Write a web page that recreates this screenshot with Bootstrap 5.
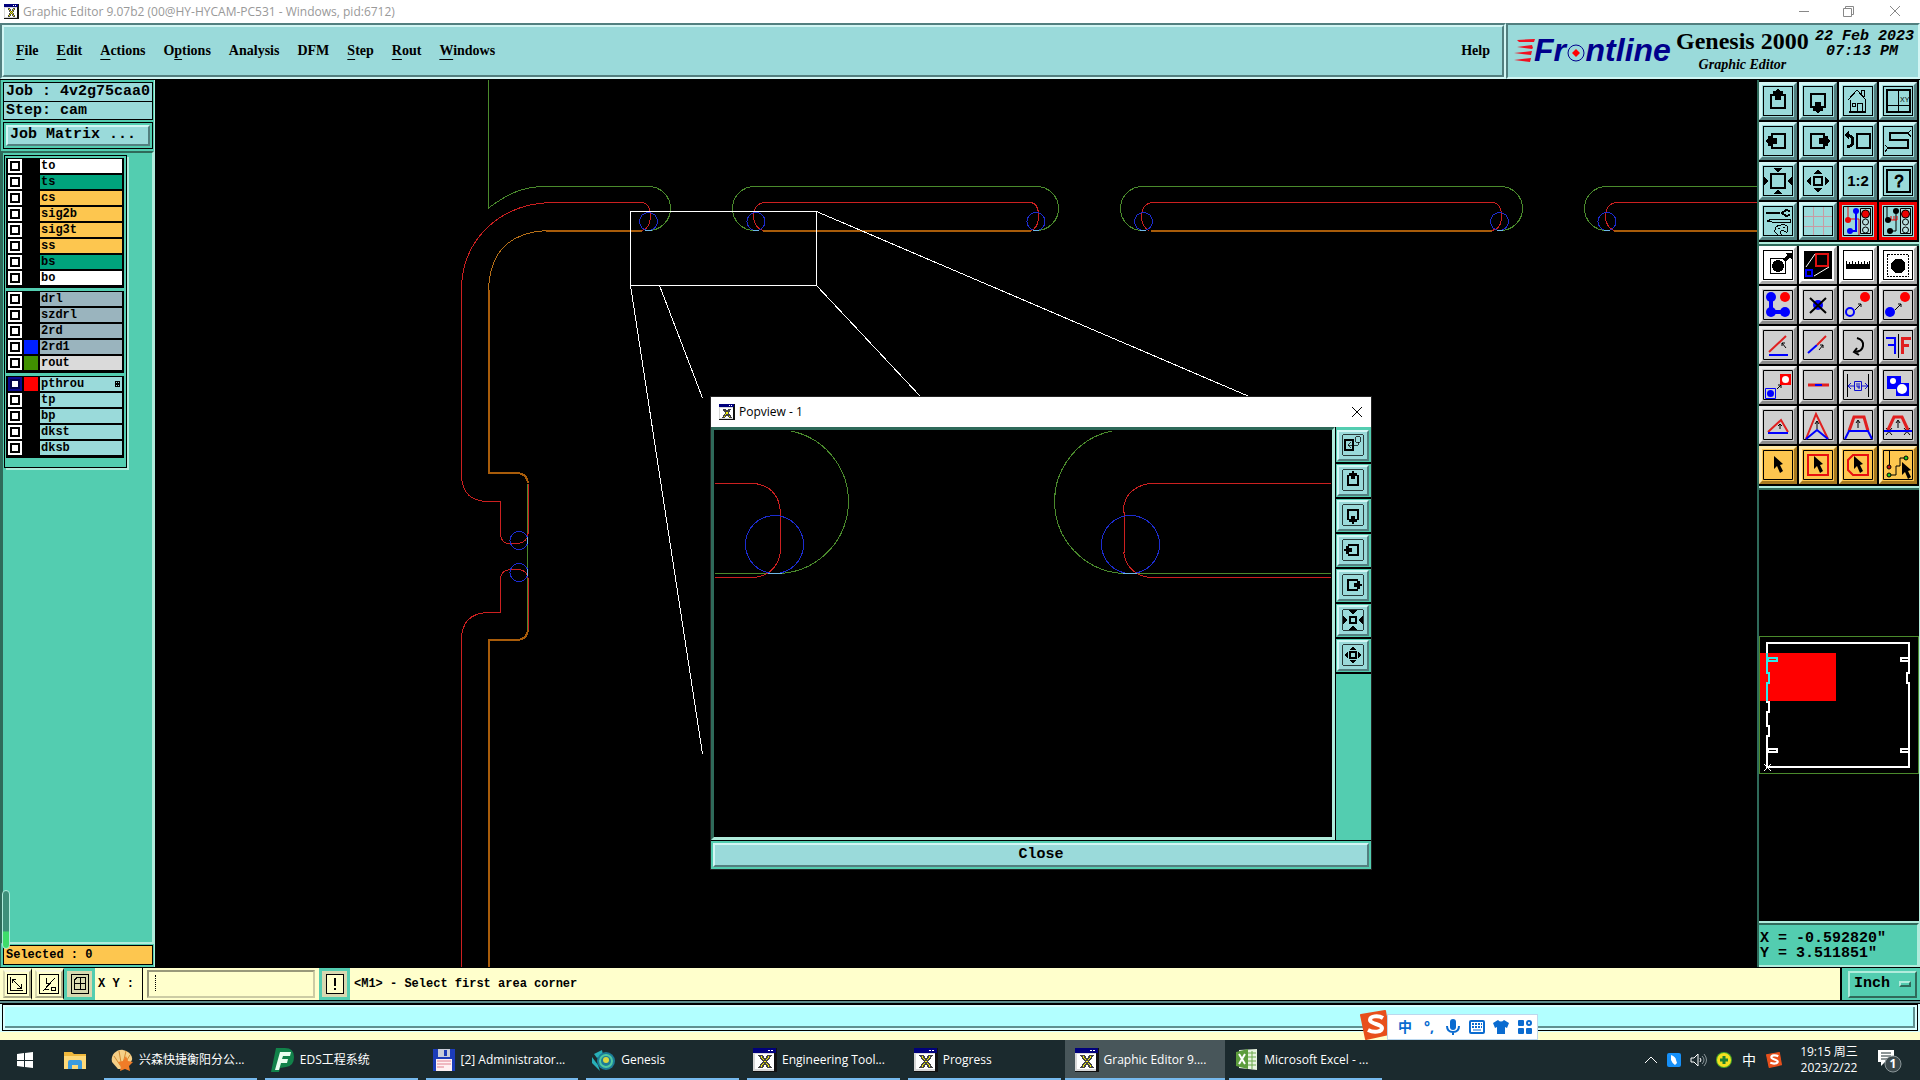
<!DOCTYPE html>
<html lang="en">
<head>
<meta charset="utf-8">
<meta name="viewport" content="width=device-width, initial-scale=1">
<title>Graphic Editor 9.07b2</title>
<link href="https://cdn.jsdelivr.net/npm/bootstrap@5.3.0/dist/css/bootstrap.min.css" rel="stylesheet">
<style>
:root{--aqua:#9adada;--aquaL:#d2f6f4;--aquaD:#527f7f;--teal:#53cdb0;--tealL:#b0ecdc;--tealD:#2f6a5a;--cream:#ffffcc;--amber:#fdc64f}
body{font-family:"Open Sans","Noto Sans CJK SC",sans-serif;font-size:12px;line-height:16px;color:#000;background:#000;overflow:hidden}
button,input,select{font:inherit;color:inherit;border-radius:0;padding:0}
svg{display:block;flex:none}
a{color:inherit;text-decoration:none}
.serif{font-family:"Liberation Serif",serif;font-weight:700}
.mono{font-family:"Liberation Mono",monospace;font-weight:700}
.m12{font-size:12px;line-height:16px}
.m15{font-size:15px;line-height:16px}
.raise{border:3px solid;border-color:var(--aquaL) var(--aquaD) var(--aquaD) var(--aquaL);background:var(--aqua)}
.title-strip{height:23px;background:#fff;color:#999}
.win-btn{width:46px;height:23px;border:0;background:none}
.head-row{height:57px;border-bottom:1px solid #000;background:var(--aqua)}
.head-pane{border:2px solid;border-color:var(--aquaD) var(--aquaL) var(--aquaL) var(--aquaD)}
.head-in{border:2px solid;border-color:var(--aquaL) var(--aquaD) var(--aquaD) var(--aquaL);height:100%}
.menu-list{gap:18px;font-size:14px;line-height:16px;padding:0 12px}
.menu-list u{text-underline-offset:4px;text-decoration-thickness:1px}
.brand-pane{width:414px;padding:0 4px 0 6px}
.product{font-size:24px;line-height:24px}
.sub{font-size:14px;line-height:16px}
.date-box{line-height:15px}
.side-l{width:155px;background:var(--teal);border-left:1px solid var(--tealD);border-right:1px solid var(--tealL)}
.job-box{border:1px solid #000;margin:2px 1px 0 2px;background:var(--aqua)}
.job-box div{padding:1px 0 0 2px;height:18px}
.job-box div+div{border-top:1px solid #000}
.matrix-wrap{border:1px solid #000;margin:2px 1px 2px 2px;padding:2px}
.matrix-btn{height:21px;width:100%;text-align:left;padding-left:2px;border-width:2px}
.layer-pane{border:2px solid;border-color:var(--tealD) var(--tealL) var(--tealL) var(--tealD)}
.layer-box{width:123px;margin:2px 2px 2px 1px;padding:2px 1px 1px;border:1px solid #000;box-shadow:2px 2px 0 var(--tealL);height:313px}
.layer-group{background:#000;padding:1px 1px 0;width:118px;margin-bottom:3px;border:solid #000;border-width:0 1px 1px}
.layer-row{height:16px;gap:2px;padding-bottom:2px}
.layer-row input{appearance:none;width:14px;height:14px;margin:0;background:#fff;border:2px solid #fff;box-shadow:inset 0 0 0 2px #000;flex:none}
.layer-row input:checked{border-color:#0a0a90;box-shadow:inset 0 0 0 2px #02024a}
.swatch{width:14px;height:14px;flex:none}
.layer-name{height:14px;padding-left:1px;line-height:14px}
.l-white{background:#fff}.l-green{background:#00a37c}.l-amber{background:var(--amber)}.l-steel{background:#9ab4be}.l-grey{background:#dadada}.l-aqua{background:var(--aqua)}
.blue{background:#0020ff}.green{background:#409000}.red{background:#f00}
.sel-box{border:1px solid #000;background:var(--amber);margin:1px 1px 2px 2px;height:20px;padding:1px 0 0 2px}
.meter{left:1px;bottom:18px;width:8px;height:59px;border:1px solid var(--tealL);border-radius:4px;background:linear-gradient(#3f8f7a 0 70%,#3fdc6a 72%)}
.pop{left:555px;top:316px;width:662px;height:474px;background:#000;border:1px solid #222}
.pop-title{height:30px;background:#fff}
.pop-view{border:3px solid;border-color:var(--tealD) var(--tealL) var(--tealL) var(--tealD);background:#000;overflow:hidden}
.pop-tools{width:35px;background:var(--teal);margin-left:1px;padding-top:2px}
.pop-tools div{border-bottom:2px solid #000;padding:1px;height:35px}
.pop-tools button{width:32px;height:31px;border-width:2px}
.pop-close{border:2px solid var(--teal);margin-top:1px}
.pop-close button{height:24px;width:100%;border-width:2px}
.side-r{width:163px;background:#000;border-left:2px solid var(--tealD);border-right:1px solid var(--tealL)}
.tool-grid{display:grid;grid-template-columns:repeat(4,40px);grid-auto-rows:40px;background:#000}
.tool-top{padding-top:2px;height:162px}
.tool-grid button{width:38px;height:38px;display:flex;align-items:center;justify-content:center}
.t-white{background:#fff;border-color:#fff #aaa #aaa #fff}
.t-grey{background:#cfcfcf;border-color:#efefef #8c8c8c #8c8c8c #efefef}
.t-amber{background:var(--amber);border-color:#ffe9a8 #a87a20 #a87a20 #ffe9a8}
.t-red{background:var(--aqua);border-color:#e00}
.edge{height:4px;background:var(--tealL);border-bottom:2px solid var(--tealD)}
.mini{border-bottom:2px solid var(--tealL)}
.xy-pane{height:44px;background:var(--teal);border:2px solid;border-color:var(--tealD) var(--tealL) var(--tealL) var(--tealD);border-left:0;padding:6px 0 0 1px}
.xy-pane div{line-height:15px}
.cmd-row{height:34px;border-top:1px solid #000;border-bottom:1px solid #000;background:var(--cream)}
.cmd-btn{width:32px;height:32px;background:var(--cream);border:2px solid var(--cream);border-right:1px solid #000;display:flex;align-items:center;justify-content:center}
.cmd-btn span{border:2px solid;border-color:#f8f8e0 #aaaa88 #aaaa88 #d8d8b0;padding:2px}
.cmd-teal{width:31px;border:3px solid var(--teal);background:#d8d8b0}
.xy-label{width:48px;padding:8px 0 0 3px;border-right:1px solid #000}
.xy-input{width:168px;height:28px;border:2px solid;border-color:#99997a #cccca4 #cccca4 #99997a;background:var(--cream)}
.xy-caret{left:8px;top:5px;height:16px;border-left:1px dotted #000}
.unit-pane{width:80px;background:var(--teal);border-left:2px solid #000;padding:0 3px 0 6px}
.unit-sel{appearance:none;width:70px;height:27px;border:2px solid;border-color:var(--tealL) var(--tealD) var(--tealD) var(--tealL);background:none;padding-left:4px}
.unit-knob{right:9px;width:12px;height:6px;border:2px solid;border-color:var(--tealL) var(--tealD) var(--tealD) var(--tealL);pointer-events:none}
.status-row{background:linear-gradient(#5f8f8f 0 2px,#000 2px 3px,#d8ffff 3px);padding:3px 2px 2px;height:31px}
.status-row div{border:1px solid #000;height:27px;background:#d8ffff;padding:2px}
.status-row i{display:block;height:21px;background:#b2ffff;border-bottom:2px solid #5f9090;border-right:2px solid #5f9090}
.cream-row{height:8px;background:var(--cream)}
.task-row{height:40px;background:#1b2a2e;color:#fff}
.task-ico{width:50px;height:40px;border:0;background:none;display:flex;align-items:center;justify-content:center}
.task-apps{width:1286px}
.task-apps button{flex:1 1 0;height:40px;min-width:0;border:0;background:none;padding-left:10px;display:flex;align-items:center;gap:5px;position:relative;white-space:nowrap}
.task-apps button::after{content:"";position:absolute;left:4px;right:4px;bottom:0;height:2px;background:#76b9ed}
.task-apps .on{background:#48565a}
.task-apps .on::after{left:0;right:0}
.tray{gap:9px;padding-right:18px}
.tray .zh{font-size:14px;width:16px;text-align:center}
.clock{width:76px;text-align:center}
.ime{left:1359px;bottom:40px;height:30px;z-index:3}
.ime-bar{height:26px;background:#fff;border:1px solid #bcd8ee;gap:8px;padding:0 4px 0 9px;margin-left:-4px}
.ime-bar svg,.ime-bar b{width:16px}
.ime-bar b{font-size:14px;color:#0a6bd0;text-align:center}
.px{shape-rendering:crispEdges}
</style>
<script src="https://cdn.jsdelivr.net/npm/bootstrap@5.3.0/dist/js/bootstrap.bundle.min.js"></script>
</head>
<body class="vh-100 d-flex flex-column position-relative">
<svg width="0" height="0" class="position-absolute">
<symbol id="xwin" viewBox="0 0 16 16"><path d="M0 0h16v16H0z" fill="#111"/><path d="M0 1h14v14H0z" fill="#d8d8d8"/><path d="M1 4h13v10H1z" fill="#fff"/><path d="M0 0h15v3H0z" fill="#00007c"/><path d="M10 1h1v1h-1zM12 1h1v1h-1z" fill="#fff"/><path d="M4 5h2l2 3 2-3h2L9 9l3 4h-2l-2-3-2 3H4l3-4z" fill="#f4f000" stroke="#444" stroke-width="1"/></symbol>
<symbol id="sogou" viewBox="0 0 30 30"><path d="M1 5L25 1l4 23L6 29z" fill="#e8501c" stroke="#e8501c" stroke-width="2" stroke-linejoin="round"/><path d="M23 8c-5-3-13-2-13 2s12 4 12 8-8 5-14 2" fill="none" stroke="#fff" stroke-width="4"/></symbol>
<symbol id="upA" viewBox="0 0 30 30"><path d="M8 9h14v13H8z" fill="none" stroke="#000" stroke-width="2"/><path d="M15 2l2 3h3v3h-2v6h-6V8h-2V5h3z"/></symbol>
<symbol id="allout" viewBox="0 0 30 30"><path d="M11 11h8v8h-8z" fill="none" stroke="#000" stroke-width="2"/><path d="M15 4l5 4H10zM15 26l5-4H10zM4 15l4-5v10zM26 15l-4-5v10z"/></symbol>
<symbol id="arrowcur" viewBox="0 0 30 30"><path d="M11 6l9 8-3 1 3 6-3 2-3-7-3 3z"/></symbol>
</svg>

<header class="title-strip d-flex align-items-center">
<svg class="ms-1 me-1 px" width="15" height="15"><use href="#xwin"/></svg>
<span class="me-auto">Graphic Editor 9.07b2 (00@HY-HYCAM-PC531 - Windows, pid:6712)</span>
<button class="win-btn" aria-label="Minimize"><svg width="46" height="22"><path d="M17 10.500h10" stroke="#888"/></svg></button>
<button class="win-btn" aria-label="Restore"><svg width="46" height="22" fill="none" stroke="#888"><path d="M15.500 7.500h8v8h-8zM17.500 7v-1.500h8v8H24"/></svg></button>
<button class="win-btn" aria-label="Close window"><svg width="46" height="22"><path d="M16 5l10 10M26 5L16 15" stroke="#888"/></svg></button>
</header>

<div class="head-row d-flex">
<nav class="head-pane flex-grow-1"><div class="head-in serif d-flex align-items-center menu-list">
<a href="#"><u>F</u>ile</a><a href="#"><u>E</u>dit</a><a href="#"><u>A</u>ctions</a><a href="#">O<u>p</u>tions</a><a href="#">Analysis</a><a href="#">DFM</a><a href="#"><u>S</u>tep</a><a href="#"><u>R</u>out</a><a href="#"><u>W</u>indows</a><a href="#" class="ms-auto">Help</a>
</div></nav>
<div class="head-pane brand-pane d-flex align-items-start">
<svg width="162" height="50" viewBox="0 0 162 50"><g fill="#f01020"><path d="M3 15l17-1h1l-1 3H5zM3 22l15-2 1 3-1 1zM0 28l18-2-1 4zM0 35l17-2-1 4z"/></g><text x="20" y="36" font-family="Liberation Sans" font-weight="700" font-style="italic" font-size="32" fill="#00008c">Fr<tspan fill="none">o</tspan>ntline</text><circle cx="62" cy="28" r="8" fill="none" stroke="#00008c" stroke-width="1"/><path d="M62 24l4 4-4 4-4-4z" fill="#f00"/></svg>
<div class="serif text-center mt-1"><div class="product">Genesis 2000</div><div class="fst-italic mt-1 sub">Graphic Editor</div></div>
<div class="mono m15 date-box fst-italic text-end ms-auto mt-1"><div class="text-nowrap">22 Feb 2023</div><div class="pe-3">07:13 PM</div></div>
</div>
</div>

<main class="d-flex flex-grow-1 position-relative" style="min-height:0">
<aside class="side-l d-flex flex-column flex-shrink-0 position-relative">
<div class="job-box mono m15"><div>Job : 4v2g75caa0</div><div>Step: cam</div></div>
<div class="matrix-wrap"><button class="raise matrix-btn mono m15 d-block">Job Matrix ...</button></div>
<div class="layer-pane flex-grow-1"><div class="layer-box mono m12">
<div class="layer-group">
<label class="layer-row d-flex"><input type="checkbox"><span class="swatch"></span><span class="layer-name l-white flex-grow-1">to</span></label>
<label class="layer-row d-flex"><input type="checkbox"><span class="swatch"></span><span class="layer-name l-green flex-grow-1">ts</span></label>
<label class="layer-row d-flex"><input type="checkbox"><span class="swatch"></span><span class="layer-name l-amber flex-grow-1">cs</span></label>
<label class="layer-row d-flex"><input type="checkbox"><span class="swatch"></span><span class="layer-name l-amber flex-grow-1">sig2b</span></label>
<label class="layer-row d-flex"><input type="checkbox"><span class="swatch"></span><span class="layer-name l-amber flex-grow-1">sig3t</span></label>
<label class="layer-row d-flex"><input type="checkbox"><span class="swatch"></span><span class="layer-name l-amber flex-grow-1">ss</span></label>
<label class="layer-row d-flex"><input type="checkbox"><span class="swatch"></span><span class="layer-name l-green flex-grow-1">bs</span></label>
<label class="layer-row d-flex"><input type="checkbox"><span class="swatch"></span><span class="layer-name l-white flex-grow-1">bo</span></label>
</div>
<div class="layer-group">
<label class="layer-row d-flex"><input type="checkbox"><span class="swatch"></span><span class="layer-name l-steel flex-grow-1">drl</span></label>
<label class="layer-row d-flex"><input type="checkbox"><span class="swatch"></span><span class="layer-name l-steel flex-grow-1">szdrl</span></label>
<label class="layer-row d-flex"><input type="checkbox"><span class="swatch"></span><span class="layer-name l-steel flex-grow-1">2rd</span></label>
<label class="layer-row d-flex"><input type="checkbox"><span class="swatch blue"></span><span class="layer-name l-steel flex-grow-1">2rd1</span></label>
<label class="layer-row d-flex"><input type="checkbox"><span class="swatch green"></span><span class="layer-name l-grey flex-grow-1">rout</span></label>
</div>
<div class="layer-group">
<label class="layer-row d-flex"><input type="checkbox" checked><span class="swatch red"></span><span class="layer-name l-aqua flex-grow-1 d-flex align-items-center justify-content-between">pthrou<svg class="px" width="7" height="6"><path d="M0 0h5v6H0z"/><path d="M1 1h1v1H1zM3 1h1v1H3zM1 4h1v1H1zM3 4h1v1H3z" fill="#9adada"/></svg></span></label>
<label class="layer-row d-flex"><input type="checkbox"><span class="swatch"></span><span class="layer-name l-aqua flex-grow-1">tp</span></label>
<label class="layer-row d-flex"><input type="checkbox"><span class="swatch"></span><span class="layer-name l-aqua flex-grow-1">bp</span></label>
<label class="layer-row d-flex"><input type="checkbox"><span class="swatch"></span><span class="layer-name l-aqua flex-grow-1">dkst</span></label>
<label class="layer-row d-flex"><input type="checkbox"><span class="swatch"></span><span class="layer-name l-aqua flex-grow-1">dksb</span></label>
</div>
</div></div>
<div class="sel-box mono m12">Selected : 0</div>
<div class="meter position-absolute"></div>
</aside>

<section class="flex-grow-1 position-relative overflow-hidden">
<svg class="px" width="100%" height="100%"><g transform="translate(-155 -80)" fill="none" stroke-width="1">
<g stroke="#4a8a2c"><path d="M488.500 80V208C505 196 520 186.500 545 186.500H648.500a22 22 0 0 1 0 44M754.500 230.500a22 22 0 0 1 0-44H1036.500a22 22 0 0 1 0 44M1142.500 230.500a22 22 0 0 1 0-44H1500.500a22 22 0 0 1 0 44M1606.500 230.500a22 22 0 0 1 0-44H1920M527.500 484V630"/></g>
<g stroke="#cc2020"><path d="M461.500 476V290C461.500 240 500 202.500 554 202.500H641Q650.500 203 650.500 216C650.500 224 647 230 641 230.500M461.500 476q1 25 26 25.500h13V535q1 8.500 9 8.500h8q10-1 10.500-10M528.500 580q-1-10.500-10.500-10.500h-8q-9 1-9.500 9V612.500H487Q461.500 614 461.500 640V968"/>
<path d="M763 230.500Q753.500 227 753.500 216T763 202.500H1030Q1038.500 203 1038.500 216T1030 230.500M1149 230.500Q1141.500 227 1141.500 216T1151 202.500H1492Q1501.500 203 1501.500 216T1492 230.500M1614 230.500Q1605.500 227 1605.500 216T1615 202.500H1920M528.500 484V534M528.500 580V630"/></g>
<path stroke="#a85c0a" stroke-width="2" d="M642 231H546M489 290V473H518q9 1 10 10M763 231H1031M1151 231H1492M1614 231H1920M528 630q-1 9-10 10H489V968"/>
<path stroke="#b87018" d="M546 230.500Q490 234 488.500 290"/>
<g stroke="#1c2cd0"><circle cx="648.500" cy="221.500" r="9"/><circle cx="756" cy="221.500" r="9"/><circle cx="1036" cy="221.500" r="9"/><circle cx="1143.500" cy="221.500" r="9"/><circle cx="1499.500" cy="221.500" r="9"/><circle cx="1607" cy="221.500" r="9"/><circle cx="519" cy="540.500" r="9"/><circle cx="519" cy="572.500" r="9"/></g>
<path stroke="#70b8e8" d="M645 230.500h7M753 230.500h6M1033 230.500h6M1140 230.500h6M1497 230.500h6M1604 230.500h6M527.500 537v7M527.500 569v7"/>
<path stroke="#fff" d="M630.500 211.500h186v74h-186zM630.500 285.500L702.500 754M659.500 285.500L702.500 398M816.500 285.500L920 396M816.500 211.500L1248 396"/>
</g></svg>

<div class="pop position-absolute d-flex flex-column" role="dialog" aria-label="Popview - 1">
<div class="pop-title d-flex align-items-center"><svg class="px ms-2" width="16" height="16"><use href="#xwin"/></svg><span class="ms-1 me-auto">Popview - 1</span><button class="border-0 bg-transparent me-2" aria-label="Close popview"><svg width="12" height="12"><path d="M1 1l10 10M11 1L1 11" stroke="#000"/></svg></button></div>
<div class="d-flex flex-grow-1" style="min-height:0">
<div class="pop-view flex-grow-1"><svg class="px" width="100%" height="100%"><g transform="translate(-714 -430)" fill="none">
<path stroke="#4a8a2c" d="M715 573.500H777A72 72 0 0 0 791 431M1331 573.500H1127.500A72 72 0 0 1 1112 431"/>
<path stroke="#cc2020" d="M715 483.500H755Q779 487 780.500 513V552Q777 574 755 577.500H715M1331 483.500H1149Q1126 488 1123.500 508V512h1V552h-1Q1127 574 1149 577.500H1331"/>
<g stroke="#1c2cd0"><circle cx="774.500" cy="544.500" r="29"/><circle cx="1130.500" cy="544.500" r="29"/></g>
<path stroke="#70b8e8" d="M768 573.500h14M1123 573.500h14"/></g></svg></div>
<div class="pop-tools">
<div><button class="raise d-flex align-items-center justify-content-center" aria-label="Source area"><svg class="px" width="22" height="22" viewBox="0 0 30 30"><path d="M1 1h28v28H1zM19 4h6v7h-6zM22 11v4H8m4-4l-4 4 4 4" fill="none" stroke="#000"/><path d="M4 8h11v14H4z" fill="none" stroke="#000" stroke-width="2"/></svg></button></div>
<div><button class="raise d-flex align-items-center justify-content-center" aria-label="Pan up"><svg class="px" width="22" height="22" viewBox="0 0 30 30"><path d="M1 1h28v28H1z" fill="none" stroke="#000"/><use href="#upA"/></svg></button></div>
<div><button class="raise d-flex align-items-center justify-content-center" aria-label="Pan down"><svg class="px" width="22" height="22" viewBox="0 0 30 30"><path d="M1 1h28v28H1z" fill="none" stroke="#000"/><use href="#upA" transform="rotate(180 15 15)"/></svg></button></div>
<div><button class="raise d-flex align-items-center justify-content-center" aria-label="Pan left"><svg class="px" width="22" height="22" viewBox="0 0 30 30"><path d="M1 1h28v28H1z" fill="none" stroke="#000"/><use href="#upA" transform="rotate(-90 15 15)"/></svg></button></div>
<div><button class="raise d-flex align-items-center justify-content-center" aria-label="Pan right"><svg class="px" width="22" height="22" viewBox="0 0 30 30"><path d="M1 1h28v28H1z" fill="none" stroke="#000"/><use href="#upA" transform="rotate(90 15 15)"/></svg></button></div>
<div><button class="raise d-flex align-items-center justify-content-center" aria-label="Zoom in"><svg class="px" width="22" height="22" viewBox="0 0 30 30"><path d="M1 1h28v28H1z" fill="none" stroke="#000"/><path d="M11 11h8v8h-8z" fill="none" stroke="#000" stroke-width="2"/><path d="M9 2h12l-6 6zM9 28h12l-6-6zM2 9v12l6-6zM28 9v12l-6-6z"/></svg></button></div>
<div><button class="raise d-flex align-items-center justify-content-center" aria-label="Zoom out"><svg class="px" width="22" height="22" viewBox="0 0 30 30"><path d="M1 1h28v28H1z" fill="none" stroke="#000"/><use href="#allout"/></svg></button></div>
</div></div>
<div class="pop-close"><button class="raise mono m15 d-block">Close</button></div>
</div>
</section>

<aside class="side-r d-flex flex-column flex-shrink-0">
<div class="tool-grid tool-top">
<button class="raise" aria-label="Pan up"><svg class="px" width="30" height="30"><path d="M.5.5h29v29H.5z" fill="none" stroke="#000"/><use href="#upA"/></svg></button>
<button class="raise" aria-label="Pan down"><svg class="px" width="30" height="30"><path d="M.5.5h29v29H.5z" fill="none" stroke="#000"/><use href="#upA" transform="rotate(180 15 15)"/></svg></button>
<button class="raise" aria-label="Home"><svg class="px" width="30" height="30"><path d="M.5.5h29v29H.5zM5 14l9-10 9 10M18 8V4h3v7M9 17h3v3H9z" fill="none" stroke="#000"/><path d="M7 14v12h15V14M14 26v-9h5v9" fill="none" stroke="#000" stroke-width="1"/><path d="M6 25h17v2H6z"/></svg></button>
<button class="raise" aria-label="XY window"><svg class="px" width="30" height="30"><path d="M.5.5h29v29H.5zM15.500 4v22M4 19.500h23" fill="none" stroke="#000"/><path d="M4 4h23v22H4z" fill="none" stroke="#000" stroke-width="2"/><text x="17" y="16" font-size="7" font-family="Liberation Sans">XY</text></svg></button>
<button class="raise" aria-label="Pan left"><svg class="px" width="30" height="30"><path d="M.5.5h29v29H.5z" fill="none" stroke="#000"/><use href="#upA" transform="rotate(-90 15 15)"/></svg></button>
<button class="raise" aria-label="Pan right"><svg class="px" width="30" height="30"><path d="M.5.5h29v29H.5z" fill="none" stroke="#000"/><use href="#upA" transform="rotate(90 15 15)"/></svg></button>
<button class="raise" aria-label="Previous view"><svg class="px" width="30" height="30"><path d="M.5.5h29v29H.5z" fill="none" stroke="#000"/><path d="M14 8h13v14H14z" fill="none" stroke="#000" stroke-width="2"/><path d="M4 10q6-1 6 5t-6 5" fill="none" stroke="#000" stroke-width="3"/><path d="M1 9l5-4v9z"/></svg></button>
<button class="raise" aria-label="Serpentine"><svg class="px" width="30" height="30"><path d="M.5.5h29v29H.5zM25 7l3-3M25 7l3 4M5 22l-3-3M5 22l-3 4" fill="none" stroke="#000"/><path d="M25 7H7v7h18v8H5" fill="none" stroke="#000" stroke-width="2"/></svg></button>
<button class="raise" aria-label="Zoom in"><svg class="px" width="30" height="30"><path d="M.5.5h29v29H.5z" fill="none" stroke="#000"/><path d="M8 8h14v14H8z" fill="none" stroke="#000" stroke-width="2"/><path d="M10 2h10l-5 4zM10 28h10l-5-4zM1 10v10l4-5zM29 10v10l-4-5z"/></svg></button>
<button class="raise" aria-label="Zoom out"><svg class="px" width="30" height="30"><path d="M.5.5h29v29H.5z" fill="none" stroke="#000"/><use href="#allout"/></svg></button>
<button class="raise" aria-label="Scale 1:2"><svg class="px" width="30" height="30"><path d="M.5.5h29v29H.5z" fill="none" stroke="#000"/><text x="15" y="20" font-size="15" font-weight="700" text-anchor="middle" font-family="Liberation Sans">1:2</text></svg></button>
<button class="raise" aria-label="Query"><svg class="px" width="30" height="30"><path d="M.5.5h29v29H.5z" fill="none" stroke="#000"/><path d="M4 4h23v22H4z" fill="none" stroke="#000" stroke-width="2"/><text x="16" y="21" font-size="16" text-anchor="middle" font-family="Liberation Sans" stroke="#000">?</text></svg></button>
<button class="raise" aria-label="Parameters"><svg class="px" width="30" height="30"><path d="M.5.5h29v29H.5zM4 15l5-2h18v3H9zM12 26q-1-6 6-7t7 4-4 2-3 3-6-2zM15 22h2M20 21h2" fill="none" stroke="#000"/><path d="M3 6h14v2H3z"/><path d="M27 5l-4-1-4 3 4 3 4-1" fill="none" stroke="#000" stroke-width="2"/></svg></button>
<button class="raise" aria-label="Grid"><svg class="px" width="30" height="30"><path d="M10.500 1v28M20.500 1v28M1 10.500h28M1 20.500h28" stroke="#c89aa4"/><path d="M.5.5h29v29H.5z" fill="none" stroke="#000"/></svg></button>
<button class="raise t-red" aria-label="Net highlight"><svg width="30" height="30"><path d="M.5.5h29v29H.5z" fill="none" stroke="#000"/><path d="M5 1v12h11v16" fill="none" stroke="#e01010"/><path d="M13 4v21H7" fill="none" stroke="#00f" stroke-width="2"/><circle cx="5" cy="14" r="3" fill="#e00"/><circle cx="13" cy="5" r="3" fill="#00f"/><circle cx="7" cy="25" r="3" fill="#00f"/><path d="M17.500 2.500h10v25h-10z" fill="#b8dede" stroke="#000"/><circle cx="22.500" cy="8" r="4" fill="#e00" stroke="#000"/><circle cx="22.500" cy="16" r="3" fill="none" stroke="#000"/><circle cx="22.500" cy="24" r="3" fill="none" stroke="#000"/></svg></button>
<button class="raise t-red" aria-label="Net measure"><svg width="30" height="30"><path d="M.5.5h29v29H.5zM4 1v12M13 4v21H7" fill="none" stroke="#000"/><path d="M6 14h8M8 10v4M11 10v4M14 10v4" stroke="#e00" fill="none"/><circle cx="5" cy="14" r="3"/><circle cx="13" cy="5" r="3"/><circle cx="7" cy="25" r="3"/><path d="M17.500 2.500h10v25h-10z" fill="#b8dede" stroke="#000"/><circle cx="22.500" cy="8" r="4" fill="#e00" stroke="#000"/><circle cx="22.500" cy="16" r="3" fill="none" stroke="#000"/><circle cx="22.500" cy="24" r="3" fill="none" stroke="#000"/></svg></button>
</div>
<div class="edge"></div>
<div class="tool-grid">
<button class="raise t-white" aria-label="Select feature"><svg class="px" width="30" height="30"><path d="M.5.5h29v29H.5zM7.500 8.500h15v15h-15z" fill="none" stroke="#000"/><circle cx="15" cy="16" r="6"/><path d="M20 9l4-4-2-2h7v6l-2-1-5 4z"/></svg></button>
<button class="raise t-white" aria-label="Popview"><svg width="30" height="30"><path d="M1 1h28v28H1z"/><path d="M13 4h12v12H13z" fill="none" stroke="#e01010" stroke-width="2"/><path d="M3 20h6v6H3z" fill="none" stroke="#00f" stroke-width="2"/><path d="M3 17L12 4M11 26l15-9" stroke="#fff"/></svg></button>
<button class="raise t-white" aria-label="Measure"><svg class="px" width="30" height="30"><path d="M.5.5h29v29H.5z" fill="none" stroke="#000"/><path d="M3 11h1v3h2v-2h1v2h2v-3h1v3h2v-2h1v2h2v-3h1v3h2v-2h1v2h2v-3h1v3h2v-2h1v2h1v-3h1v8H3z"/></svg></button>
<button class="raise t-white" aria-label="Pad"><svg class="px" width="30" height="30"><path d="M.5.5h29v29H.5z" fill="none" stroke="#000"/><path d="M4.500 4.500h21v22h-21z" fill="none" stroke="#000" stroke-dasharray="2 1"/><path d="M12 9h6l4 4v6l-4 4h-6l-4-4v-6z"/></svg></button>

<button class="raise t-grey" aria-label="Connect"><svg width="30" height="30"><path d="M.5.5h29v29H.5z" fill="none" stroke="#000"/><path d="M8 7v15h14" fill="none" stroke="#00f" stroke-width="4"/><g fill="#00f"><circle cx="8" cy="7" r="5"/><circle cx="8" cy="22" r="5"/><circle cx="22" cy="22" r="5"/></g><circle cx="22" cy="7" r="5" fill="#f00"/></svg></button>
<button class="raise t-grey" aria-label="Delete"><svg width="30" height="30"><path d="M.5.5h29v29H.5z" fill="none" stroke="#000"/><circle cx="15" cy="15" r="5" fill="#00f"/><path d="M7 8l16 15M23 8L7 23" stroke="#000" stroke-width="2"/></svg></button>
<button class="raise t-grey" aria-label="Move"><svg width="30" height="30"><path d="M.5.5h29v29H.5zM12 20l6-6M15 14h3v3" fill="none" stroke="#000"/><circle cx="7" cy="22" r="4" fill="none" stroke="#00f" stroke-width="2"/><circle cx="22" cy="7" r="5" fill="#f00"/></svg></button>
<button class="raise t-grey" aria-label="Copy"><svg width="30" height="30"><path d="M.5.5h29v29H.5zM12 20l6-6M15 14h3v3" fill="none" stroke="#000"/><circle cx="7" cy="22" r="5" fill="#00f"/><circle cx="22" cy="7" r="5" fill="#f00"/></svg></button>

<button class="raise t-grey" aria-label="Rotate line"><svg width="30" height="30"><path d="M.5.5h29v29H.5zM23 18l-4-5M19 16v-3h3" fill="none" stroke="#000"/><path d="M6 22L23 6" stroke="#e02020" stroke-width="2"/><path d="M6 25h19" stroke="#00f" stroke-width="2"/></svg></button>
<button class="raise t-grey" aria-label="Extend line"><svg width="30" height="30"><path d="M.5.5h29v29H.5zM16 20l4-5M17 15h3v3" fill="none" stroke="#000"/><path d="M5 23l9-8" stroke="#00f" stroke-width="2"/><path d="M14 15l9-9" stroke="#e02020" stroke-width="2"/></svg></button>
<button class="raise t-grey" aria-label="Rotate"><svg width="30" height="30"><path d="M.5.5h29v29H.5z" fill="none" stroke="#000"/><path d="M14 8q7 2 6 8t-9 6M14 18l-3 4 5 3" fill="none" stroke="#000" stroke-width="2"/></svg></button>
<button class="raise t-grey" aria-label="Mirror"><svg class="px" width="30" height="30"><path d="M.5.5h29v29H.5zM15.500 4v24" fill="none" stroke="#000"/><path d="M3 8h9v16M12 15H5" fill="none" stroke="#00f" stroke-width="2"/><path d="M28 8h-9v16M19 15h7" fill="none" stroke="#e02020" stroke-width="3"/></svg></button>

<button class="raise t-grey" aria-label="Replace"><svg width="30" height="30"><path d="M.5.5h29v29H.5zM14 19l4-4M15 15h3v3" fill="none" stroke="#000"/><path d="M17 4h11v11H17z" fill="#f00"/><circle cx="22.500" cy="9.500" r="3.500" fill="#fff"/><path d="M2.500 18.500h10v10h-10z" fill="none" stroke="#00f"/><circle cx="7.500" cy="23.500" r="3.500" fill="#00f"/></svg></button>
<button class="raise t-grey" aria-label="Break line"><svg width="30" height="30"><path d="M.5.5h29v29H.5z" fill="none" stroke="#000"/><path d="M5 15h21" stroke="#e02020" stroke-width="3"/><path d="M12 15h7" stroke="#00f" stroke-width="2"/></svg></button>
<button class="raise t-grey" aria-label="Spacing"><svg width="30" height="30"><path d="M.5.5h29v29H.5zM4.500 4v23M25.500 4v23" fill="none" stroke="#000"/><path d="M11.500 11.500h7v9h-7zM5 16h6M19 16h6M8 13l-3 3 3 3M22 13l3 3-3 3M14 13v4h3M16 13v6" fill="none" stroke="#1010d0"/></svg></button>
<button class="raise t-grey" aria-label="Surface"><svg width="30" height="30"><path d="M.5.5h29v29H.5z" fill="none" stroke="#000"/><path d="M4 6h14v7h8v13H13v-7H4z" fill="#00f"/><circle cx="10" cy="11" r="3" fill="#fff"/><circle cx="19" cy="19" r="5" fill="#fff"/></svg></button>

<button class="raise t-grey" aria-label="Low corner"><svg width="30" height="30"><path d="M.5.5h29v29H.5zM17 19v-5M15 16l2-2 2 2" fill="none" stroke="#000"/><path d="M5 22L18 10l7 12" fill="none" stroke="#e02020" stroke-width="2"/><path d="M5 23h20" stroke="#00f" stroke-width="2"/></svg></button>
<button class="raise t-grey" aria-label="High corner"><svg width="30" height="30"><path d="M.5.5h29v29H.5zM14 19v-8M12 14l2-3 2 3" fill="none" stroke="#000"/><path d="M3 29L13 4l12 25" fill="none" stroke="#e02020" stroke-width="2"/><path d="M3 29l11-9 11 9" fill="none" stroke="#00f" stroke-width="2"/></svg></button>
<button class="raise t-grey" aria-label="Slide segment"><svg width="30" height="30"><path d="M.5.5h29v29H.5zM15 18v-7M13 13l2-3 2 3" fill="none" stroke="#000"/><path d="M6 21l5-14h10l4 14" fill="none" stroke="#e02020" stroke-width="3"/><path d="M2 29l4-8h19l4 8" fill="none" stroke="#00f" stroke-width="2"/></svg></button>
<button class="raise t-grey" aria-label="Slide and trim"><svg width="30" height="30"><path d="M.5.5h29v29H.5zM15 18v-7M13 13l2-3 2 3M3 18l6 7M9 18l-6 7M21 18l6 7M27 18l-6 7" fill="none" stroke="#000"/><path d="M5 20l6-13h8l6 13" fill="none" stroke="#e02020" stroke-width="3"/><path d="M1 21h28" stroke="#00f" stroke-width="2"/></svg></button>

<button class="raise t-amber" aria-label="Pick"><svg width="30" height="30"><path d="M.5.5h29v29H.5z" fill="none" stroke="#000"/><use href="#arrowcur"/></svg></button>
<button class="raise t-amber" aria-label="Pick in frame"><svg width="30" height="30"><path d="M.5.5h29v29H.5z" fill="none" stroke="#000"/><path d="M5 5h20v20H5z" fill="none" stroke="#e81010" stroke-width="2"/><use href="#arrowcur"/></svg></button>
<button class="raise t-amber" aria-label="Pick in polygon"><svg width="30" height="30"><path d="M.5.5h29v29H.5z" fill="none" stroke="#000"/><path d="M10 5h15v20H10l-5-5V10z" fill="none" stroke="#e81010" stroke-width="2"/><use href="#arrowcur"/></svg></button>
<button class="raise t-amber" aria-label="Pick net"><svg width="30" height="30"><path d="M.5.5h29v29H.5zM6.500 1v14M6 25h7v-9h4V8h6" fill="none" stroke="#000"/><circle cx="6" cy="17" r="2" fill="#c01010" stroke="#000"/><circle cx="6" cy="25" r="2" fill="#2c2" stroke="#000"/><circle cx="23" cy="8" r="2" fill="#2c2" stroke="#000"/><use href="#arrowcur" transform="translate(8 6)"/></svg></button>
</div>
<div class="edge"></div>
<div class="mini flex-grow-1 overflow-hidden"><svg width="160" height="432"><g transform="translate(-1759 -490)" fill="none">
<path class="px" d="M1759 653h77v48h-77z" fill="#f00"/><path class="px" d="M1759.500 636.500h159v137h-159z" stroke="#4a8a2c"/>
<path class="px" stroke="#fff" stroke-width="2" d="M1767 701v1h2v10h-2v14h2v10h-2v31h142V683h-2v-10h2V643H1767v10M1768 749h9v3h-9zM1901 749h8v3h-8zM1901 658h8v3h-8z"/>
<path class="px" stroke="#30e8e8" stroke-width="2" d="M1767 653v20h2v10h-2v18M1768 658h9v3h-9z"/>
<path d="M1764 764l7 7M1771 764l-7 7" stroke="#fff"/></g></svg></div>
<div class="xy-pane mono m15"><div>X = -0.592820"</div><div>Y = 3.511851"</div></div>
</aside>
</main>

<div class="cmd-row d-flex align-items-center flex-shrink-0">
<button class="cmd-btn" aria-label="Snap line"><span><svg class="px" width="20" height="20"><path d="M.5.5h19v19H.5zM3.500 3v13H16M5 5l9 9M5 9V5h4M14 10v4h-4" fill="none" stroke="#000"/></svg></span></button>
<button class="cmd-btn" aria-label="Snap angle"><span><svg class="px" width="20" height="20"><path d="M.5.5h19v19H.5zM4 17L16 4M7 4v5h4M6 15h4M12 13h4v3h-4z" fill="none" stroke="#000"/></svg></span></button>
<button class="cmd-btn cmd-teal" aria-label="Snap grid"><svg class="px" width="18" height="20"><path d="M.5.5h17v19H.5zM3.500 6l3-3h8v12h-11zM9.500 3v12M3 9.500h12" fill="none" stroke="#000"/></svg></button>
<label for="xy" class="xy-label mono m12 text-nowrap align-self-stretch">X Y :</label>
<div class="position-relative px-1"><input id="xy" class="xy-input d-block" type="text"><span class="xy-caret position-absolute ms-1"></span></div>
<button class="cmd-btn cmd-teal" aria-label="Alert"><svg class="px" width="18" height="20"><path d="M.5.5h17v19H.5z" fill="#ffffcc" stroke="#000"/><path d="M8 4h2v8H8zM8 14h2v2H8z"/></svg></button>
<span class="mono m12 ms-1 me-auto">&lt;M1&gt; - Select first area corner</span>
<div class="unit-pane h-100 d-flex align-items-center position-relative"><select class="unit-sel mono m15" aria-label="Units"><option>Inch</option></select><span class="unit-knob position-absolute"></span></div>
</div>
<div class="status-row flex-shrink-0"><div><i></i></div></div>
<div class="cream-row flex-shrink-0"></div>

<div class="ime position-absolute d-flex align-items-end">
<svg width="32" height="30"><use href="#sogou"/></svg>
<div class="ime-bar d-flex align-items-center"><b>中</b><b>°,</b>
<svg height="18" viewBox="0 0 16 18"><rect x="5" y="1" width="6" height="11" rx="3" fill="#0a6bd0"/><path d="M2 8q0 6 6 6t6-6M8 14v3" fill="none" stroke="#0a6bd0" stroke-width="2"/></svg>
<svg height="14" viewBox="0 0 16 14"><rect x="1" y="1" width="14" height="12" rx="1" fill="none" stroke="#0a6bd0" stroke-width="2"/><path d="M3 4h10M3 7h10" stroke="#0a6bd0" stroke-width="2" stroke-dasharray="2 1"/><path d="M4 10h8" stroke="#0a6bd0"/></svg>
<svg height="16" viewBox="0 0 16 16"><path d="M5 1q3 3 6 0l5 3-2 5-2-1v7H4V8L2 9 0 4z" fill="#0a6bd0"/></svg>
<svg height="16" viewBox="0 0 16 16"><g fill="#0a6bd0"><rect x="1" y="1" width="6" height="6" rx="1"/><rect x="1" y="9" width="6" height="6" rx="1"/><rect x="9" y="9" width="6" height="6" rx="1"/></g><circle cx="12" cy="4" r="2" fill="none" stroke="#0a6bd0" stroke-width="2"/></svg>
</div></div>

<footer class="task-row d-flex align-items-center flex-shrink-0">
<button class="task-ico" aria-label="Start"><svg width="16" height="16"><path d="M0 2l7-1v7H0zM8 1l8-1v8H8zM0 9h7v6l-7-1zM8 9h8v7l-8-1z" fill="#fff"/></svg></button>
<button class="task-ico" aria-label="File Explorer"><svg width="22" height="18"><path d="M0 1h8l2 2h12v14H0z" fill="#f0b83c"/><path d="M0 5h22v13H0z" fill="#ffd978"/><path d="M4 18v-7q0-2 2-2h10q2 0 2 2v7h-4v-4H8v4z" fill="#3c9be0"/></svg></button>
<div class="task-apps d-flex">
<button><svg width="24" height="24"><path d="M2 14C0 6 8 1 13 2s10 5 9 10l-6 9H8z" fill="#f6cf86"/><path d="M12 20L4 8M12 20L9 3M12 20l4-17M12 20l8-13" stroke="#d08a30"/><path d="M16 8l2 5 5 1-4 4 1 5-5-2-5 2 1-5-3-4 5-1z" fill="#f07c28"/></svg>兴森快捷衡阳分公...</button>
<button><svg width="24" height="24"><path d="M5 0h9q9 0 9 9t-8 10l-6 1-1 4H0z" fill="#12824a"/><path d="M9 4h11l-1 4h-7l-1 3h6l-1 4h-6l-2 7H4z" fill="#eafff0"/></svg>EDS工程系统</button>
<button><svg width="24" height="24"><path d="M1 1h22v22H1z" fill="#1c3cb8"/><path d="M6 1h12v8H6z" fill="#c8ccd8"/><path d="M12 2h3v6h-3z" fill="#1c3cb8"/><path d="M4 11h16v12H4z" fill="#fff0f2"/><path d="M5 13h14M5 16h14M5 19h7" stroke="#e08090"/></svg>[2] Administrator...</button>
<button><svg width="24" height="24"><path d="M2 6l8-4 1 5-6 3zM0 9l6 8 2 6-8-8z" fill="#28b0b8"/><circle cx="14" cy="13" r="9" fill="#1c7c98"/><circle cx="14" cy="13" r="6" fill="none" stroke="#50c8a0" stroke-width="2"/><circle cx="14" cy="12" r="3" fill="#d8d840"/></svg>Genesis</button>
<button><svg width="24" height="24" class="px"><use href="#xwin"/></svg>Engineering Tool...</button>
<button><svg width="24" height="24" class="px"><use href="#xwin"/></svg>Progress</button>
<button class="on"><svg width="24" height="24" class="px"><use href="#xwin"/></svg>Graphic Editor 9....</button>
<button><svg width="24" height="24"><path d="M4 2l18-1v21L4 20z" fill="#e8f4e0"/><path d="M13 5h8M13 9h8M13 13h8M13 17h8M17 3v18" stroke="#6aa84a"/><path d="M1 4l12-3v20L1 18z" fill="#5c9c3c"/><path d="M4 6l6 10M10 6L4 16" stroke="#fff" stroke-width="2"/></svg>Microsoft Excel - ...</button>
</div>
<div class="tray d-flex align-items-center ms-auto">
<svg width="14" height="16"><path d="M1 11l6-6 6 6" fill="none" stroke="#fff"/></svg>
<svg width="14" height="14"><rect width="14" height="14" rx="2" fill="#1690f8"/><path d="M4 2q5 2 5 5l1 3-2 2q-3-2-4-5z" fill="#fff"/></svg>
<svg width="17" height="16" fill="none" stroke="#fff"><path d="M1 6h3l4-4v12l-4-4H1zM10 6q2 2 0 4"/><path d="M12 4q4 4 0 8M14 2q5 6 0 12" stroke="#8a9598"/></svg>
<svg width="16" height="16"><circle cx="8" cy="8" r="8" fill="#48a828"/><circle cx="8" cy="8" r="7" fill="#f4e020"/><path d="M8 4v8M4 8h8" stroke="#1c8030" stroke-width="3"/></svg>
<span class="zh">中</span>
<svg width="16" height="16"><use href="#sogou"/></svg>
<div class="clock"><div>19:15 周三</div><div>2023/2/22</div></div>
<svg width="26" height="26"><path d="M2 3h16v12h-9l-4 4v-4H2z" fill="#fff"/><path d="M5 6h10M5 9h10M5 12h7" stroke="#1b2a2e"/><circle cx="17" cy="17" r="8" fill="#3c484c" stroke="#8a9598"/><text x="17" y="21" text-anchor="middle" font-size="12" font-weight="700" fill="#fff">1</text></svg>
</div>
</footer>
</body>
</html>
